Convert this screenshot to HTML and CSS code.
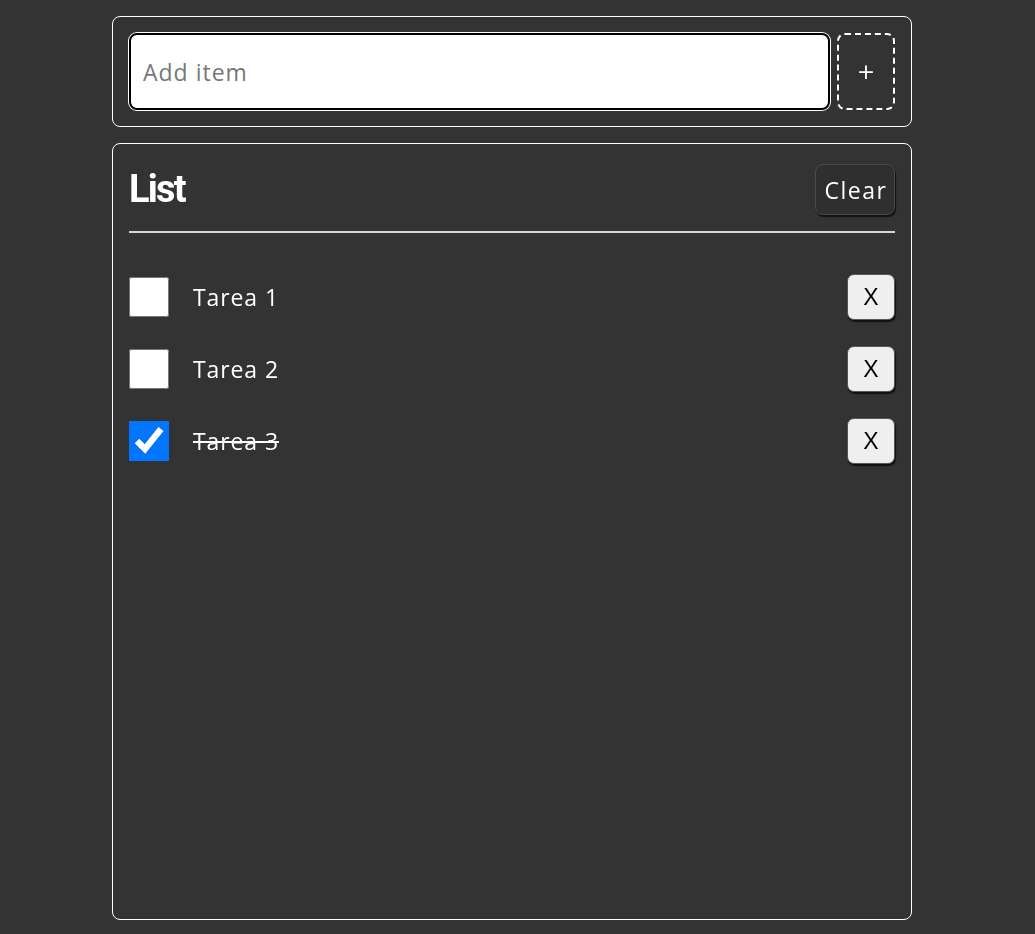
FILE: index.html
```html
<!DOCTYPE html>
<html lang="es">
<head>
<meta charset="utf-8">
<title>List</title>
<link rel="stylesheet" href="styles.css">
</head>
<body>
<div class="page">
  <form class="card add-card">
    <input class="add-input" type="text" placeholder="Add item" autofocus>
    <button class="add-btn" type="button">+</button>
  </form>
  <section class="card list-card">
    <header class="list-header">
      <h2 class="list-title">List</h2>
      <button class="clear-btn" type="button">Clear</button>
    </header>
    <ul class="items">
      <li class="item">
        <input class="check" type="checkbox">
        <span class="item-text">Tarea 1</span>
        <button class="del-btn" type="button">X</button>
      </li>
      <li class="item">
        <input class="check" type="checkbox">
        <span class="item-text">Tarea 2</span>
        <button class="del-btn" type="button">X</button>
      </li>
      <li class="item">
        <input class="check" type="checkbox" checked>
        <span class="item-text done">Tarea 3</span>
        <button class="del-btn" type="button">X</button>
      </li>
    </ul>
  </section>
</div>
</body>
</html>
```

FILE: styles.css
```css
html, body {
  margin: 0;
  padding: 0;
  background: #333333;
}
body {
  font-family: "Open Sans", "DejaVu Sans", sans-serif;
  color: #ffffff;
}
.page {
  width: 1024px;
  padding-top: 16px;
  display: flex;
  flex-direction: column;
  align-items: center;
  gap: 16px;
}
.card {
  box-sizing: border-box;
  width: 800px;
  border: 1px solid #ffffff;
  border-radius: 8px;
  padding: 16px;
  margin: 0;
}
.add-card {
  display: flex;
  gap: 7px;
  height: 111px;
}
.add-input {
  flex: 1;
  box-sizing: border-box;
  height: 77px;
  margin: 0;
  border: 2px solid #000000;
  border-radius: 8px;
  box-shadow: 0 0 0 1px #ffffff;
  background: #ffffff;
  padding: 0 12px;
  font-family: "Open Sans", "DejaVu Sans", sans-serif;
  font-size: 23px;
  letter-spacing: 1px;
  color: #222;
  caret-color: #000;
  outline: none;
}
.add-input::placeholder {
  color: #777777;
}
.add-btn {
  box-sizing: border-box;
  width: 58px;
  height: 77px;
  background: transparent;
  border: 2px dashed #ffffff;
  border-radius: 8px;
  color: #ffffff;
  font-family: "DejaVu Sans", sans-serif;
  font-size: 22px;
  padding: 0;
}
.list-card {
  height: 777px;
}
.list-header {
  display: flex;
  justify-content: space-between;
  align-items: center;
  padding: 4px 0 16px;
  border-bottom: 2px solid #d6d6d6;
}
.list-title {
  margin: 0;
  font-family: Roboto, sans-serif;
  font-weight: 700;
  font-size: 38px;
  letter-spacing: -1.8px;
  line-height: 51px;
}
.clear-btn {
  box-sizing: border-box;
  width: 80px;
  height: 51px;
  background: #2f2f2f;
  border: 1px solid #4a4a4a;
  border-radius: 8px;
  box-shadow: 1px 2px 1px #111111;
  color: #ffffff;
  font-family: "Open Sans", "DejaVu Sans", sans-serif;
  font-size: 23px;
  letter-spacing: 1.5px;
  padding: 0 0 0 2px;
}
.items {
  list-style: none;
  margin: 41px 0 0;
  padding: 0;
  display: flex;
  flex-direction: column;
  gap: 26px;
}
.item {
  display: flex;
  align-items: center;
  height: 46px;
}
.check {
  width: 40px;
  height: 40px;
  margin: 0 24px 0 0;
  accent-color: #0075ff;
}
.item-text {
  font-size: 23px;
  letter-spacing: 0.9px;
}
.done {
  text-decoration: line-through;
}
.del-btn {
  margin-left: auto;
  box-sizing: border-box;
  width: 48px;
  height: 46px;
  background: #efefef;
  border: 1px solid #555555;
  border-radius: 7px;
  box-shadow: 1px 2px 1px #111111;
  color: #000000;
  font-family: "Liberation Sans", sans-serif;
  font-size: 23px;
  padding: 0;
}
```
